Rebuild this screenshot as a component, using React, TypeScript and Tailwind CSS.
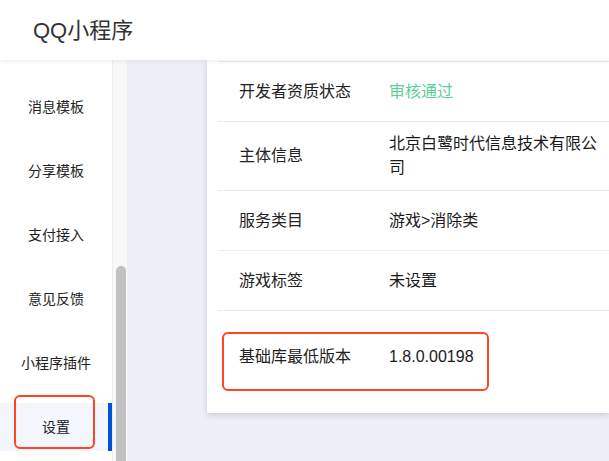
import React from 'react';

const menu = ['消息模板', '分享模板', '支付接入', '意见反馈', '小程序插件', '设置'];

const rows: { label: string; value: string; green?: boolean }[] = [
  { label: '开发者资质状态', value: '审核通过', green: true },
  { label: '主体信息', value: '北京白鹭时代信息技术有限公司' },
  { label: '服务类目', value: '游戏>消除类' },
  { label: '游戏标签', value: '未设置' },
];

export default function App() {
  return (
    <div
      className="w-[609px] h-[461px] overflow-hidden bg-[#edf0f7] flex flex-col"
      style={{ fontFamily: '"Liberation Sans", "Noto Sans CJK SC", sans-serif' }}
    >
      {/* 顶部 */}
      <header className="relative z-10 h-[60px] shrink-0 bg-white flex items-center pl-[33px] shadow-[0_2px_4px_rgba(0,0,0,0.06)]">
        <span className="text-[22px] text-[#333]">QQ小程序</span>
      </header>

      <div className="flex flex-1 min-h-0">
        {/* 侧边栏 */}
        <aside className="relative w-[112px] shrink-0 bg-white">
          <ul className="flex flex-col gap-4 pt-[23px]">
            {menu.map((m) => {
              const active = m === '设置';
              return (
                <li
                  key={m}
                  className={`relative h-12 flex items-center justify-center text-[14px] text-[#222] ${active ? 'bg-[#f3f6fd]' : ''}`}
                >
                  {m}
                  {active && <span className="absolute right-0 top-0 bottom-0 w-[4px] bg-[#0052d9]" />}
                  {active && (
                    <span className="absolute left-[14px] top-[-8px] w-[81px] h-[54px] border-2 border-[#ff4523] rounded-[6px]" />
                  )}
                </li>
              );
            })}
          </ul>
        </aside>

        {/* 滚动条 */}
        <div className="relative w-[15px] shrink-0 bg-[#f8f8f8] border-l border-[#ececec]">
          <div className="absolute left-[3px] top-[206px] w-[10px] bottom-0 rounded-t-full bg-[#c1c1c1]" />
        </div>

        {/* 主区域 */}
        <main className="flex-1 pl-[80px] min-w-0">
          <div className="bg-white shadow-[0_2px_6px_rgba(0,0,0,0.15)] pl-[11px] pt-[1px] h-[353px]">
            <div className="border-t border-[#ececec]" />
            {rows.map((r) => (
              <div key={r.label} className="flex items-center min-h-[60px] py-[10px] border-b border-[#ececec] text-[16px] leading-6">
                <span className="w-[171px] shrink-0 pl-[21px] text-[#222]">{r.label}</span>
                <span className={`w-[212px] ${r.green ? 'text-[#5ccf97]' : 'text-[#1a1a1a]'}`}>{r.value}</span>
              </div>
            ))}
            <div className="relative flex items-center pt-[34px] text-[16px] leading-6">
              <span className="w-[171px] shrink-0 pl-[21px] text-[#222]">基础库最低版本</span>
              <span className="text-[#1a1a1a]">1.8.0.00198</span>
              <span className="absolute left-[4px] top-[21px] w-[267px] h-[59px] border-2 border-[#ff4523] rounded-[6px]" />
            </div>
          </div>
        </main>
      </div>
    </div>
  );
}
